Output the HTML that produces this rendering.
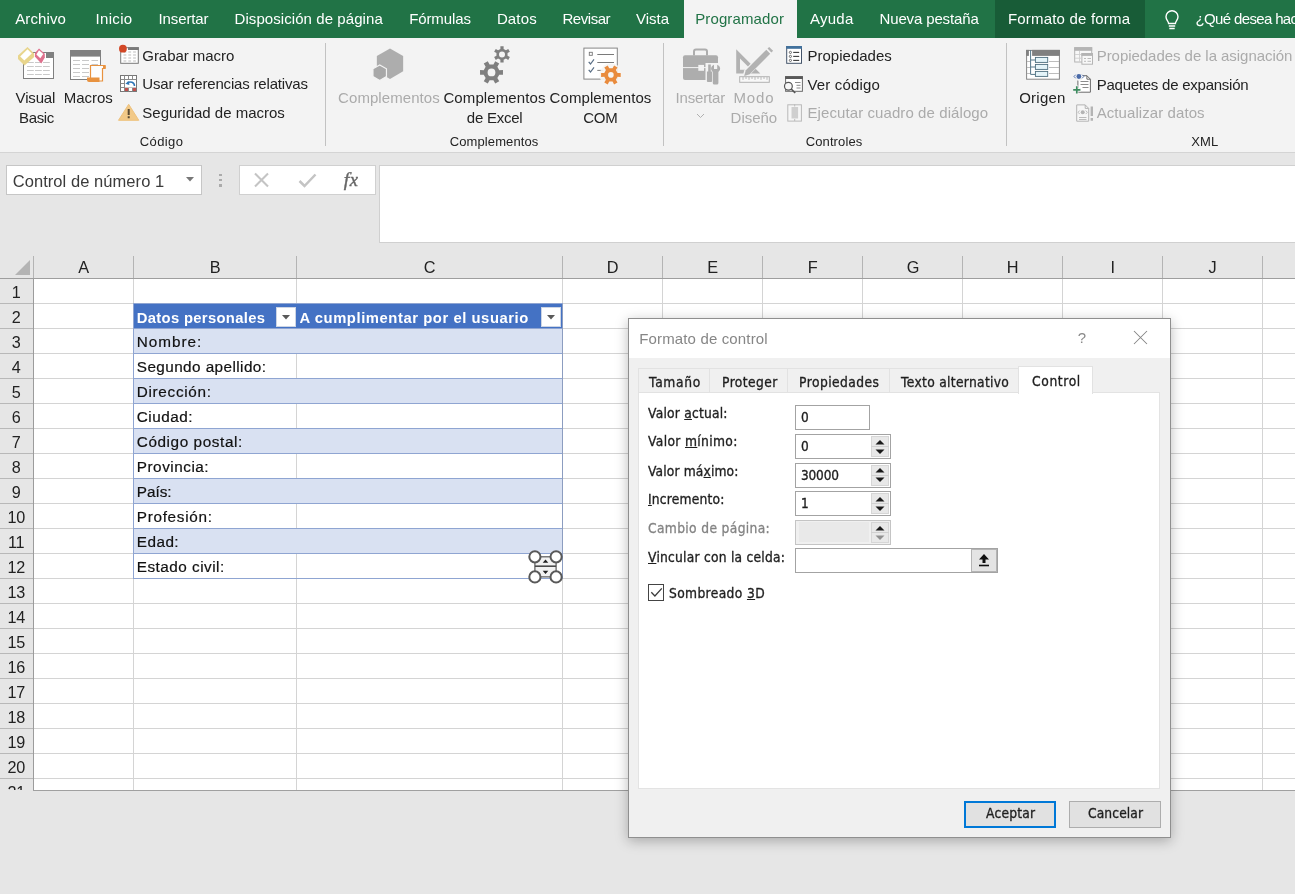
<!DOCTYPE html>
<html lang="es"><head><meta charset="utf-8"><title>Excel - Formato de control</title>
<style>
html,body{margin:0;padding:0}
body{width:1295px;height:894px;position:relative;overflow:hidden;background:#e6e6e6;font-family:"Liberation Sans", sans-serif;}
#app div,#app span,#app svg{position:absolute;box-sizing:border-box}
#app span{white-space:nowrap;line-height:20px;height:20px}
#app{will-change:transform}
#app u{text-decoration:underline;text-underline-offset:1px}
</style></head><body><div id="app" style="position:absolute;left:0;top:0;width:1295px;height:894px;overflow:hidden">
<div style="left:0px;top:0px;width:1295px;height:38px;background:#217346;"></div>
<div style="left:684px;top:0px;width:113px;height:38px;background:#f3f3f3;"></div>
<div style="left:995px;top:0px;width:150px;height:38px;background:#185c37;"></div>
<span id="t0" style="left:15.2px;top:9.1px;font-size:15px;color:#ffffff;letter-spacing:0.124px;">Archivo</span>
<span id="t1" style="left:95.5px;top:9.1px;font-size:15px;color:#ffffff;letter-spacing:0.328px;">Inicio</span>
<span id="t2" style="left:158.5px;top:9.1px;font-size:15px;color:#ffffff;letter-spacing:-0.107px;">Insertar</span>
<span id="t3" style="left:234.5px;top:9.1px;font-size:15px;color:#ffffff;letter-spacing:0.073px;">Disposición de página</span>
<span id="t4" style="left:409.2px;top:9.1px;font-size:15px;color:#ffffff;letter-spacing:-0.114px;">Fórmulas</span>
<span id="t5" style="left:496.9px;top:9.1px;font-size:15px;color:#ffffff;letter-spacing:0.143px;">Datos</span>
<span id="t6" style="left:562.5px;top:9.1px;font-size:15px;color:#ffffff;letter-spacing:-0.466px;">Revisar</span>
<span id="t7" style="left:635.9px;top:9.1px;font-size:15px;color:#ffffff;letter-spacing:0.024px;">Vista</span>
<span id="t8" style="left:695.2px;top:9.1px;font-size:15px;color:#217346;letter-spacing:0.123px;">Programador</span>
<span id="t9" style="left:809.9px;top:9.1px;font-size:15px;color:#ffffff;letter-spacing:0.287px;">Ayuda</span>
<span id="t10" style="left:879.5px;top:9.1px;font-size:15px;color:#ffffff;letter-spacing:-0.139px;">Nueva pestaña</span>
<span id="t11" style="left:1007.9px;top:9.1px;font-size:15px;color:#ffffff;letter-spacing:0.199px;">Formato de forma</span>
<span id="t12" style="left:1195.6px;top:9.1px;font-size:15px;color:#ffffff;letter-spacing:-0.65px;">¿Qué desea hacer?</span>
<svg style="left:1161px;top:6.700px" width="22" height="24" viewBox="0 0 22 24"><g fill="none" stroke="#fff" stroke-width="1.4"><path d="M7.6 16.5c0-2.2-2.6-3.4-2.6-6.8a6 6 0 0 1 12 0c0 3.400-2.600 4.600-2.600 6.800z"/><path d="M7.800 19h6.400M8.300 21.500h5.400"/></g></svg>
<div style="left:0px;top:38px;width:1295px;height:114px;background:#f3f3f3;"></div>
<div style="left:0px;top:152px;width:1295px;height:1px;background:#d4d4d4;"></div>
<div style="left:325px;top:43px;width:1px;height:103px;background:#c2c2c2;"></div>
<div style="left:663px;top:43px;width:1px;height:103px;background:#c2c2c2;"></div>
<div style="left:1006px;top:43px;width:1px;height:103px;background:#c2c2c2;"></div>
<span id="t13" style="left:15.6px;top:87.5px;font-size:15px;color:#232323;letter-spacing:-0.166px;">Visual</span>
<span id="t14" style="left:19.0px;top:107.5px;font-size:15px;color:#232323;letter-spacing:-0.337px;">Basic</span>
<span id="t15" style="left:63.8px;top:87.5px;font-size:15px;color:#232323;letter-spacing:-0.048px;">Macros</span>
<span id="t16" style="left:142.3px;top:45.5px;font-size:15px;color:#232323;letter-spacing:-0.044px;">Grabar macro</span>
<span id="t17" style="left:142.3px;top:74.4px;font-size:15px;color:#232323;letter-spacing:-0.175px;">Usar referencias relativas</span>
<span id="t18" style="left:142.3px;top:103.1px;font-size:15px;color:#232323;letter-spacing:-0.005px;">Seguridad de macros</span>
<span id="t19" style="left:139.8px;top:132.0px;font-size:13px;color:#232323;letter-spacing:0.383px;">Código</span>
<span id="t20" style="left:338.1px;top:87.7px;font-size:15px;color:#ababab;letter-spacing:0.067px;">Complementos</span>
<span id="t21" style="left:443.4px;top:87.7px;font-size:15px;color:#232323;letter-spacing:0.109px;">Complementos</span>
<span id="t22" style="left:466.8px;top:107.7px;font-size:15px;color:#232323;letter-spacing:-0.243px;">de Excel</span>
<span id="t23" style="left:549.6px;top:87.7px;font-size:15px;color:#232323;letter-spacing:0.076px;">Complementos</span>
<span id="t24" style="left:583.2px;top:107.7px;font-size:15px;color:#232323;letter-spacing:-0.233px;">COM</span>
<span id="t25" style="left:449.7px;top:132.0px;font-size:13px;color:#232323;letter-spacing:0.114px;">Complementos</span>
<span id="t26" style="left:675.5px;top:87.6px;font-size:15px;color:#ababab;letter-spacing:-0.157px;">Insertar</span>
<span id="t27" style="left:733.5px;top:87.6px;font-size:15px;color:#ababab;letter-spacing:0.867px;">Modo</span>
<span id="t28" style="left:730.6px;top:108.0px;font-size:15px;color:#ababab;letter-spacing:-0.034px;">Diseño</span>
<span id="t29" style="left:807.5px;top:45.7px;font-size:15px;color:#232323;letter-spacing:0.006px;">Propiedades</span>
<span id="t30" style="left:807.5px;top:74.8px;font-size:15px;color:#232323;letter-spacing:0.161px;">Ver código</span>
<span id="t31" style="left:807.5px;top:103.4px;font-size:15px;color:#ababab;letter-spacing:0.086px;">Ejecutar cuadro de diálogo</span>
<span id="t32" style="left:805.7px;top:132.0px;font-size:13px;color:#232323;letter-spacing:0.118px;">Controles</span>
<span id="t33" style="left:1019.2px;top:87.7px;font-size:15px;color:#232323;letter-spacing:0.245px;">Origen</span>
<span id="t34" style="left:1096.7px;top:45.6px;font-size:15px;color:#ababab;letter-spacing:-0.040px;">Propiedades de la asignación</span>
<span id="t35" style="left:1096.7px;top:74.8px;font-size:15px;color:#232323;letter-spacing:-0.243px;">Paquetes de expansión</span>
<span id="t36" style="left:1096.7px;top:103.2px;font-size:15px;color:#ababab;letter-spacing:0.079px;">Actualizar datos</span>
<span id="t37" style="left:1191.2px;top:132.3px;font-size:13px;color:#232323;letter-spacing:0.122px;">XML</span>
<svg style="left:16px;top:45px" width="40" height="36" viewBox="16 45 40 36"><rect x="23.5" y="52.5" width="30" height="26" fill="#fff" stroke="#808080"/><rect x="46" y="52" width="8" height="6" fill="#808080"/><path d="M27 62.5h6.800M35 62.5h6.800M43 62.5h6.800" stroke="#c9c9c9" stroke-width="1"/><path d="M27 66.5h6.800M35 66.5h6.800M43 66.5h6.800" stroke="#c9c9c9" stroke-width="1"/><path d="M27 70.5h6.800M35 70.5h6.800M43 70.5h6.800" stroke="#c9c9c9" stroke-width="1"/><path d="M27 74.5h6.800M35 74.5h6.800M43 74.5h6.800" stroke="#c9c9c9" stroke-width="1"/><path d="M27.500 47L34.200 53.500V57L24.500 65.500L18 59V55.500Z" fill="#e8d58c"/><path d="M27.500 49.200L31.800 53.500L24.300 60.500L20.200 56.400Z" fill="#fff"/><path d="M39 48.500L44.800 53.800V57.500L41.300 63.500L35 56.800V53Z" fill="#e0708d"/><path d="M39 50.200L43.300 54L40.300 58.300L36.400 54.400Z" fill="#fff"/></svg>
<svg style="left:68px;top:48px" width="40" height="36" viewBox="68 48 40 36"><rect x="70.500" y="50.500" width="30" height="29" fill="#fff" stroke="#808080"/><rect x="70" y="50" width="31" height="6.600" fill="#808080"/><path d="M73 60.5h7M82 60.5h7M91.500 60.5h6.500" stroke="#c9c9c9" stroke-width="1"/><path d="M73 64.5h7M82 64.5h7M91.500 64.5h6.500" stroke="#c9c9c9" stroke-width="1"/><path d="M73 68.5h7M82 68.5h7M91.500 68.5h6.500" stroke="#c9c9c9" stroke-width="1"/><path d="M73 72.5h7M82 72.5h7M91.500 72.5h6.500" stroke="#c9c9c9" stroke-width="1"/><path d="M73 76.5h7M82 76.5h7M91.500 76.5h6.500" stroke="#c9c9c9" stroke-width="1"/><path d="M90.500 65.500h14.500v3h-2.500v12.500h-12z" fill="#fdfdfd" stroke="#e8923f" stroke-width="1.200"/><path d="M87 77.500h12.500v4.500h-10.500a2 2 0 0 1-2-2z" fill="#e8923f"/><path d="M103 65.500h2.600v3h-2.600z" fill="#e8923f"/></svg>
<svg style="left:118px;top:44px" width="22" height="21" viewBox="118 44 22 21"><rect x="120.700" y="47.700" width="17.600" height="15.600" fill="#fff" stroke="#7a7a7a"/><rect x="128" y="47.200" width="10.800" height="2.800" fill="#7a7a7a"/><path d="M123.500 52h2.800M128.300 52h2.800M133.100 52h2.800" stroke="#bdbdbd" stroke-width="1.200"/><path d="M123.500 55h2.800M128.300 55h2.800M133.100 55h2.800" stroke="#bdbdbd" stroke-width="1.200"/><path d="M123.500 58h2.800M128.300 58h2.800M133.100 58h2.800" stroke="#bdbdbd" stroke-width="1.200"/><path d="M123.500 61h2.800M128.300 61h2.800M133.100 61h2.800" stroke="#bdbdbd" stroke-width="1.200"/><circle cx="122.900" cy="48.700" r="3.900" fill="#d24726"/></svg>
<svg style="left:119px;top:74px" width="20" height="20" viewBox="119 74 20 20"><rect x="120.500" y="75.500" width="16" height="16" fill="#fff" stroke="#777"/><path d="M124.500 75.500v16M128.500 75.500v16M132.500 75.500v16M120.500 79.500h16M120.500 83.500h16M120.500 87.500h16" stroke="#8a8a8a" stroke-width="1" fill="none"/><rect x="125" y="88" width="3" height="3" fill="#c0504d"/><rect x="133" y="88" width="3" height="3" fill="#c0504d"/><rect x="125" y="80" width="11" height="7.500" fill="#fff"/><path d="M134.500 86c0-3.800-4-5-7.500-3.300" fill="none" stroke="#2e75b6" stroke-width="1.500"/><path d="M125.300 83.800l3.600-2.500.5 3.600z" fill="#2e75b6"/></svg>
<svg style="left:117px;top:102px" width="24" height="21" viewBox="117 102 24 21"><path d="M128.700 104.300L138.800 120.300H118.500Z" fill="#f2c987" stroke="#eec27e" stroke-width="1" stroke-linejoin="round"/><path d="M127.700 109h2v6h-2zM127.700 116.300h2v2h-2z" fill="#5a4a32"/></svg>
<svg style="left:370px;top:46px" width="36" height="36" viewBox="370 46 36 36"><polygon points="390,48.5 376.84,56.1 376.84,71.3 390,78.9 403.16,71.3 403.16,56.1" fill="#adadad"/><polygon points="379.7,64.9 372.95,68.8 372.95,76.6 379.7,80.5 386.45,76.6 386.45,68.8" fill="#a8a8a8" stroke="#f3f3f3" stroke-width="1.200"/></svg>
<svg style="left:478px;top:44px" width="34" height="42" viewBox="478 44 34 42"><path d="M502.97 70.09 L502.97 74.71 L499.28 74.66 L497.35 78.01 L499.24 81.18 L495.23 83.49 L493.43 80.27 L489.57 80.27 L487.77 83.49 L483.76 81.18 L485.65 78.01 L483.72 74.66 L480.03 74.71 L480.03 70.09 L483.72 70.14 L485.65 66.79 L483.76 63.62 L487.77 61.31 L489.57 64.53 L493.43 64.53 L495.23 61.31 L499.24 63.62 L497.35 66.79 L499.28 70.14Z M495.4 72.4 A3.9 3.9 0 1 0 487.6 72.4 A3.9 3.9 0 1 0 495.4 72.4Z" fill="#7f7f7f" fill-rule="evenodd"/><path d="M503.64 62.54 L500.36 62.54 L500.41 59.87 L498.05 58.51 L495.77 59.89 L494.13 57.05 L496.46 55.76 L496.46 53.04 L494.13 51.75 L495.77 48.91 L498.05 50.29 L500.41 48.93 L500.36 46.26 L503.64 46.26 L503.59 48.93 L505.95 50.29 L508.23 48.91 L509.87 51.75 L507.54 53.04 L507.54 55.76 L509.87 57.05 L508.23 59.89 L505.95 58.51 L503.59 59.87Z M505 54.4 A3 3 0 1 0 499 54.4 A3 3 0 1 0 505 54.4Z" fill="#7f7f7f" fill-rule="evenodd"/></svg>
<svg style="left:582px;top:46px" width="42" height="42" viewBox="582 46 42 42"><rect x="583.900" y="48.100" width="33.400" height="31" fill="#fff" stroke="#858585"/><rect x="589.300" y="52.300" width="3" height="3" fill="none" stroke="#777" stroke-width="0.900"/><path d="M597.300 54.500h16.700M597.300 62.500h16.700M597.300 70.400h6" stroke="#7a7a7a" stroke-width="1"/><path d="M588.700 61.800l1.800 2.200 3.500-4.600M588.700 69.800l1.800 2.200 3.500-4.600" fill="none" stroke="#5a6f86" stroke-width="1.200"/><circle cx="610.900" cy="74.900" r="11.300" fill="#f6f4f2" opacity="0.900"/><path d="M620.7 72.92 L620.7 76.88 L617.53 76.83 L615.88 79.68 L617.51 82.4 L614.09 84.38 L612.55 81.6 L609.25 81.6 L607.71 84.38 L604.29 82.4 L605.92 79.68 L604.27 76.83 L601.1 76.88 L601.1 72.92 L604.27 72.97 L605.92 70.12 L604.29 67.4 L607.71 65.42 L609.25 68.2 L612.55 68.2 L614.09 65.42 L617.51 67.4 L615.88 70.12 L617.53 72.97Z M613.7 74.9 A2.8 2.8 0 1 0 608.1 74.9 A2.8 2.8 0 1 0 613.7 74.9Z" fill="#e98b3d" fill-rule="evenodd"/></svg>
<svg style="left:681px;top:47px" width="42" height="39" viewBox="681 47 42 39"><path d="M694 55.500v-4a2 2 0 0 1 2-2h9a2 2 0 0 1 2 2v4" fill="none" stroke="#adadad" stroke-width="2"/><rect x="683" y="55.200" width="35" height="24.800" rx="2" fill="#adadad"/><path d="M683 67.600h35" stroke="#f3f3f3" stroke-width="1"/><rect x="698.300" y="64.900" width="5.700" height="5.900" fill="#f3f3f3"/><path d="M705.500 63h16v22h-16z" fill="#f3f3f3"/><path d="M708.200 64.500h2.600v7h1.300v9.500a1 1 0 0 1-1 1h-3.200a1 1 0 0 1-1-1V71.500h1.300z" fill="#adadad"/><path d="M714 64.800v4.200h3.200v-4.200a4 4 0 0 1 1.200 7.200v11a1.500 1.500 0 0 1-1.500 1.500h-2.600a1.500 1.500 0 0 1-1.500-1.500v-11a4 4 0 0 1 1.200-7.200z" fill="#adadad"/></svg>
<svg style="left:734px;top:45px" width="42" height="40" viewBox="734 45 42 40"><path d="M736.200 49.200V73.500H760.300Z M740 58.500L751.200 69.800H740Z" fill="#b2b2b2" fill-rule="evenodd"/><path d="M768.500 45.500l5.300 5.300-24.500 24.500-7 2 2-7z" fill="#f3f3f3"/><path d="M766.300 49.800l3.900 3.900-20.500 20.500-5.600 1.700 1.700-5.600z" fill="#b2b2b2"/><path d="M767.500 48.600l1.700-1.700 3.900 3.900-1.700 1.700z" fill="#b2b2b2"/><rect x="739.700" y="76.700" width="29.600" height="5.600" fill="#f8f8f8" stroke="#b2b2b2"/><path d="M743 77v2.800M746 77v2M749 77v2.800M752 77v2M755 77v2.800M758 77v2M761 77v2.800M764 77v2M767 77v2.800" stroke="#b2b2b2" stroke-width="0.900"/></svg>
<svg style="left:785px;top:45px" width="18" height="20" viewBox="785 45 18 20"><rect x="786.700" y="46.500" width="14.800" height="16.800" fill="#fff" stroke="#44546a"/><rect x="786.200" y="46" width="15.800" height="2.800" fill="#41719c"/><circle cx="790.400" cy="52.4" r="1.100" fill="#fff" stroke="#3b3b3b" stroke-width="0.700"/><path d="M793.200 52.4h6" stroke="#3b3b3b" stroke-width="1.100"/><circle cx="790.400" cy="56.4" r="1.100" fill="#fff" stroke="#3b3b3b" stroke-width="0.700"/><path d="M793.200 56.4h6" stroke="#3b3b3b" stroke-width="1.100"/><circle cx="790.400" cy="60.4" r="1.100" fill="#fff" stroke="#3b3b3b" stroke-width="0.700"/><path d="M793.200 60.4h6" stroke="#3b3b3b" stroke-width="1.100"/></svg>
<svg style="left:783px;top:75px" width="22" height="20" viewBox="783 75 22 20"><rect x="785.600" y="76.700" width="16.800" height="14.600" fill="#fff" stroke="#6a6a6a"/><rect x="785.100" y="76.200" width="17.800" height="2.800" fill="#595959"/><path d="M795 82.500h5.500M796.500 85.300h4M796.500 88h4" stroke="#8a8a8a" stroke-width="1"/><circle cx="788.400" cy="86.200" r="3.900" fill="#f6f6f6" stroke="#555" stroke-width="1.200"/><path d="M791.200 89l4 4" stroke="#555" stroke-width="1.700"/></svg>
<svg style="left:786px;top:103px" width="18" height="20" viewBox="786 103 18 20"><rect x="787.800" y="104.800" width="13.600" height="16.300" fill="#f6f6f6" stroke="#b9b9b9"/><rect x="791.500" y="107" width="6.600" height="11.500" fill="#cfcfcf"/><path d="M794.700 104.500v2M794.700 119v2" stroke="#b0b0b0" stroke-width="0.800"/></svg>
<svg style="left:1025px;top:48px" width="36" height="33" viewBox="1025 48 36 33"><rect x="1026.600" y="50.400" width="32.800" height="28.800" fill="#fff" stroke="#858585"/><rect x="1032.100" y="49.900" width="27.800" height="6" fill="#808080"/><rect x="1026.100" y="49.900" width="2.800" height="6" fill="#808080"/><path d="M1049 61.500h10M1049 67.500h10M1049 73.500h10M1027 61.500h3M1027 67.500h3M1027 73.500h3" stroke="#bdbdbd" stroke-width="1"/><path d="M1030.600 50v24.400h5M1030.600 60h5M1030.600 67h5" fill="none" stroke="#54788a" stroke-width="1"/><rect x="1035.400" y="57.4" width="12.300" height="5" fill="#e4f4f9" stroke="#4d6e7e" stroke-width="0.900"/><rect x="1035.400" y="64.4" width="12.300" height="5" fill="#e4f4f9" stroke="#4d6e7e" stroke-width="0.900"/><rect x="1035.400" y="71.4" width="12.300" height="5" fill="#e4f4f9" stroke="#4d6e7e" stroke-width="0.900"/></svg>
<svg style="left:1073px;top:46px" width="21" height="20" viewBox="1073 46 21 20"><rect x="1074.700" y="47.700" width="17" height="14.300" fill="#f8f8f8" stroke="#b4b4b4"/><rect x="1074.200" y="47.200" width="18" height="3.600" fill="#b4b4b4"/><path d="M1075 54.500h6M1075 58.200h6M1079.500 51v11" stroke="#cfcfcf" stroke-width="0.900"/><rect x="1081.900" y="53.600" width="10.600" height="10.600" fill="#f8f8f8" stroke="#b4b4b4"/><rect x="1081.400" y="53.100" width="11.600" height="2.800" fill="#b4b4b4"/><path d="M1084 58.500h2M1087.500 58.500h3.500M1084 61.300h2M1087.500 61.300h3.500" stroke="#b4b4b4" stroke-width="0.900"/></svg>
<svg style="left:1072px;top:72px" width="21" height="23" viewBox="1072 72 21 23"><path d="M1077.900 75.700h9l3.500 3.500v13h-12.500z" fill="#fff" stroke="#6a6a6a" stroke-width="1"/><path d="M1086.900 75.700v3.500h3.500" fill="none" stroke="#6a6a6a" stroke-width="1"/><path d="M1080.500 81.500h8M1080.500 84.500h8M1082.500 87.500h6" stroke="#8c8c8c" stroke-width="1"/><circle cx="1078.900" cy="76.500" r="4.200" fill="#f3f3f3"/><circle cx="1078.900" cy="76.500" r="2.400" fill="#4a6aa8"/><path d="M1075.700 74.700l-1.700 1.800 1.700 1.800M1082.100 74.700l1.700 1.800-1.700 1.800" fill="none" stroke="#4a6aa8" stroke-width="0.900"/><path d="M1072.500 89.800h8.500M1076.700 85.600v8.500" stroke="#f3f3f3" stroke-width="3.400"/><path d="M1073.200 89.800h7.200M1076.800 86.200v7.200" stroke="#3d8b5f" stroke-width="1.700"/></svg>
<svg style="left:1075px;top:103px" width="20" height="20" viewBox="1075 103 20 20"><path d="M1076.700 104.900h8.500l3.500 3.500v12.800h-12z" fill="#f6f6f6" stroke="#b4b4b4" stroke-width="1"/><path d="M1085.200 104.900v3.500h3.500" fill="none" stroke="#b4b4b4"/><circle cx="1082.700" cy="112.300" r="2" fill="#b4b4b4"/><path d="M1079.700 110.500l-1.600 1.800 1.600 1.800M1085.700 110.500l1.600 1.800-1.600 1.800M1079 117.500h7.500M1079 119.500h7.500" fill="none" stroke="#b4b4b4" stroke-width="0.900"/><path d="M1090.600 106.500h2.400v9.500h-2.400zM1090.600 118h2.400v2.800h-2.400z" fill="#b4b4b4"/></svg>
<svg style="left:696px;top:113px" width="9" height="6" viewBox="0 0 9 6"><path d="M1 1l3.500 3.500L8 1" fill="none" stroke="#b0b0b0" stroke-width="1"/></svg>
<div style="left:6px;top:165px;width:196px;height:30px;background:#fff;border:1px solid #c6c6c6;"></div>
<span id="t38" style="left:12.7px;top:170.6px;font-size:16.5px;color:#3b3b3b;letter-spacing:0.062px;">Control de número 1</span>
<svg style="left:186px;top:177px" width="8" height="5" viewBox="0 0 8 5"><path d="M0 0h8L4 4.500z" fill="#777"/></svg>
<div style="left:219px;top:173.7px;width:3px;height:2.6px;background:#ababab;"></div>
<div style="left:219px;top:178.9px;width:3px;height:2.6px;background:#ababab;"></div>
<div style="left:219px;top:184px;width:3px;height:2.6px;background:#ababab;"></div>
<div style="left:239px;top:165px;width:137px;height:30px;background:#fff;border:1px solid #d0d0d0;"></div>
<svg style="left:253px;top:172px" width="18" height="16" viewBox="0 0 18 16"><path d="M2 1.500l13 13M15 1.500l-13 13" stroke="#c4c4c4" stroke-width="2.100" fill="none"/></svg>
<svg style="left:297px;top:172px" width="20" height="16" viewBox="0 0 20 16"><path d="M2.500 9l5 5L18.500 2.500" stroke="#c4c4c4" stroke-width="2.500" fill="none"/></svg>
<span id="t39" style="left:343.7px;top:169.6px;font-size:19.5px;color:#666;font-family:'Liberation Serif', serif;font-style:italic;-webkit-text-stroke:0.4px #666;">f</span>
<span id="t40" style="left:349.7px;top:170.2px;font-size:18.5px;color:#666;font-family:'Liberation Serif', serif;font-style:italic;-webkit-text-stroke:0.4px #666;">x</span>
<div style="left:379px;top:165px;width:920px;height:78px;background:#fff;border:1px solid #d0d0d0;"></div>
<div style="left:0px;top:255px;width:1295px;height:24px;background:#e6e6e6;"></div>
<div style="left:0px;top:279px;width:34px;height:511px;background:#e6e6e6;"></div>
<div style="left:34px;top:279px;width:1261px;height:511px;background:#fff;"></div>
<div style="left:34px;top:303px;width:1261px;height:1px;background:#d4d4d4;"></div>
<div style="left:34px;top:328px;width:1261px;height:1px;background:#d4d4d4;"></div>
<div style="left:34px;top:353px;width:1261px;height:1px;background:#d4d4d4;"></div>
<div style="left:34px;top:378px;width:1261px;height:1px;background:#d4d4d4;"></div>
<div style="left:34px;top:403px;width:1261px;height:1px;background:#d4d4d4;"></div>
<div style="left:34px;top:428px;width:1261px;height:1px;background:#d4d4d4;"></div>
<div style="left:34px;top:453px;width:1261px;height:1px;background:#d4d4d4;"></div>
<div style="left:34px;top:478px;width:1261px;height:1px;background:#d4d4d4;"></div>
<div style="left:34px;top:503px;width:1261px;height:1px;background:#d4d4d4;"></div>
<div style="left:34px;top:528px;width:1261px;height:1px;background:#d4d4d4;"></div>
<div style="left:34px;top:553px;width:1261px;height:1px;background:#d4d4d4;"></div>
<div style="left:34px;top:578px;width:1261px;height:1px;background:#d4d4d4;"></div>
<div style="left:34px;top:603px;width:1261px;height:1px;background:#d4d4d4;"></div>
<div style="left:34px;top:628px;width:1261px;height:1px;background:#d4d4d4;"></div>
<div style="left:34px;top:653px;width:1261px;height:1px;background:#d4d4d4;"></div>
<div style="left:34px;top:678px;width:1261px;height:1px;background:#d4d4d4;"></div>
<div style="left:34px;top:703px;width:1261px;height:1px;background:#d4d4d4;"></div>
<div style="left:34px;top:728px;width:1261px;height:1px;background:#d4d4d4;"></div>
<div style="left:34px;top:753px;width:1261px;height:1px;background:#d4d4d4;"></div>
<div style="left:34px;top:778px;width:1261px;height:1px;background:#d4d4d4;"></div>
<div style="left:133px;top:279px;width:1px;height:511px;background:#d4d4d4;"></div>
<div style="left:296px;top:279px;width:1px;height:511px;background:#d4d4d4;"></div>
<div style="left:562px;top:279px;width:1px;height:511px;background:#d4d4d4;"></div>
<div style="left:662px;top:279px;width:1px;height:511px;background:#d4d4d4;"></div>
<div style="left:762px;top:279px;width:1px;height:511px;background:#d4d4d4;"></div>
<div style="left:862px;top:279px;width:1px;height:511px;background:#d4d4d4;"></div>
<div style="left:962px;top:279px;width:1px;height:511px;background:#d4d4d4;"></div>
<div style="left:1062px;top:279px;width:1px;height:511px;background:#d4d4d4;"></div>
<div style="left:1162px;top:279px;width:1px;height:511px;background:#d4d4d4;"></div>
<div style="left:1262px;top:279px;width:1px;height:511px;background:#d4d4d4;"></div>
<div style="left:33px;top:256px;width:1px;height:23px;background:#b4b4b4;"></div>
<div style="left:133px;top:256px;width:1px;height:23px;background:#b4b4b4;"></div>
<div style="left:296px;top:256px;width:1px;height:23px;background:#b4b4b4;"></div>
<div style="left:562px;top:256px;width:1px;height:23px;background:#b4b4b4;"></div>
<div style="left:662px;top:256px;width:1px;height:23px;background:#b4b4b4;"></div>
<div style="left:762px;top:256px;width:1px;height:23px;background:#b4b4b4;"></div>
<div style="left:862px;top:256px;width:1px;height:23px;background:#b4b4b4;"></div>
<div style="left:962px;top:256px;width:1px;height:23px;background:#b4b4b4;"></div>
<div style="left:1062px;top:256px;width:1px;height:23px;background:#b4b4b4;"></div>
<div style="left:1162px;top:256px;width:1px;height:23px;background:#b4b4b4;"></div>
<div style="left:1262px;top:256px;width:1px;height:23px;background:#b4b4b4;"></div>
<div style="left:0px;top:278px;width:1295px;height:1px;background:#9e9e9e;"></div>
<div style="left:33px;top:279px;width:1px;height:511px;background:#9c9c9c;"></div>
<div style="left:0px;top:303px;width:33px;height:1px;background:#b8b8b8;"></div>
<div style="left:0px;top:328px;width:33px;height:1px;background:#b8b8b8;"></div>
<div style="left:0px;top:353px;width:33px;height:1px;background:#b8b8b8;"></div>
<div style="left:0px;top:378px;width:33px;height:1px;background:#b8b8b8;"></div>
<div style="left:0px;top:403px;width:33px;height:1px;background:#b8b8b8;"></div>
<div style="left:0px;top:428px;width:33px;height:1px;background:#b8b8b8;"></div>
<div style="left:0px;top:453px;width:33px;height:1px;background:#b8b8b8;"></div>
<div style="left:0px;top:478px;width:33px;height:1px;background:#b8b8b8;"></div>
<div style="left:0px;top:503px;width:33px;height:1px;background:#b8b8b8;"></div>
<div style="left:0px;top:528px;width:33px;height:1px;background:#b8b8b8;"></div>
<div style="left:0px;top:553px;width:33px;height:1px;background:#b8b8b8;"></div>
<div style="left:0px;top:578px;width:33px;height:1px;background:#b8b8b8;"></div>
<div style="left:0px;top:603px;width:33px;height:1px;background:#b8b8b8;"></div>
<div style="left:0px;top:628px;width:33px;height:1px;background:#b8b8b8;"></div>
<div style="left:0px;top:653px;width:33px;height:1px;background:#b8b8b8;"></div>
<div style="left:0px;top:678px;width:33px;height:1px;background:#b8b8b8;"></div>
<div style="left:0px;top:703px;width:33px;height:1px;background:#b8b8b8;"></div>
<div style="left:0px;top:728px;width:33px;height:1px;background:#b8b8b8;"></div>
<div style="left:0px;top:753px;width:33px;height:1px;background:#b8b8b8;"></div>
<div style="left:0px;top:778px;width:33px;height:1px;background:#b8b8b8;"></div>
<svg style="left:14px;top:259px" width="17" height="17" viewBox="0 0 17 17"><path d="M16 1v15H1z" fill="#b4b4b4"/></svg>
<span id="t41" style="left:77.7px;top:257.1px;font-size:16.3px;color:#222;width:12px;text-align:center;">A</span>
<span id="t42" style="left:209.2px;top:257.1px;font-size:16.3px;color:#222;width:12px;text-align:center;">B</span>
<span id="t43" style="left:423.7px;top:257.1px;font-size:16.3px;color:#222;width:12px;text-align:center;">C</span>
<span id="t44" style="left:606.7px;top:257.1px;font-size:16.3px;color:#222;width:12px;text-align:center;">D</span>
<span id="t45" style="left:706.7px;top:257.1px;font-size:16.3px;color:#222;width:12px;text-align:center;">E</span>
<span id="t46" style="left:806.7px;top:257.1px;font-size:16.3px;color:#222;width:12px;text-align:center;">F</span>
<span id="t47" style="left:906.7px;top:257.1px;font-size:16.3px;color:#222;width:12px;text-align:center;">G</span>
<span id="t48" style="left:1006.7px;top:257.1px;font-size:16.3px;color:#222;width:12px;text-align:center;">H</span>
<span id="t49" style="left:1106.7px;top:257.1px;font-size:16.3px;color:#222;width:12px;text-align:center;">I</span>
<span id="t50" style="left:1206.7px;top:257.1px;font-size:16.3px;color:#222;width:12px;text-align:center;">J</span>
<span id="t51" style="left:-0.8px;top:282.0px;font-size:16.2px;color:#222;width:34px;text-align:center;letter-spacing:-0.3px;">1</span>
<span id="t52" style="left:-0.8px;top:307.0px;font-size:16.2px;color:#222;width:34px;text-align:center;letter-spacing:-0.3px;">2</span>
<span id="t53" style="left:-0.8px;top:332.0px;font-size:16.2px;color:#222;width:34px;text-align:center;letter-spacing:-0.3px;">3</span>
<span id="t54" style="left:-0.8px;top:357.0px;font-size:16.2px;color:#222;width:34px;text-align:center;letter-spacing:-0.3px;">4</span>
<span id="t55" style="left:-0.8px;top:382.0px;font-size:16.2px;color:#222;width:34px;text-align:center;letter-spacing:-0.3px;">5</span>
<span id="t56" style="left:-0.8px;top:407.0px;font-size:16.2px;color:#222;width:34px;text-align:center;letter-spacing:-0.3px;">6</span>
<span id="t57" style="left:-0.8px;top:432.0px;font-size:16.2px;color:#222;width:34px;text-align:center;letter-spacing:-0.3px;">7</span>
<span id="t58" style="left:-0.8px;top:457.0px;font-size:16.2px;color:#222;width:34px;text-align:center;letter-spacing:-0.3px;">8</span>
<span id="t59" style="left:-0.8px;top:482.0px;font-size:16.2px;color:#222;width:34px;text-align:center;letter-spacing:-0.3px;">9</span>
<span id="t60" style="left:-0.8px;top:507.0px;font-size:16.2px;color:#222;width:34px;text-align:center;letter-spacing:-0.3px;">10</span>
<span id="t61" style="left:-0.8px;top:532.0px;font-size:16.2px;color:#222;width:34px;text-align:center;letter-spacing:-0.3px;">11</span>
<span id="t62" style="left:-0.8px;top:557.0px;font-size:16.2px;color:#222;width:34px;text-align:center;letter-spacing:-0.3px;">12</span>
<span id="t63" style="left:-0.8px;top:582.0px;font-size:16.2px;color:#222;width:34px;text-align:center;letter-spacing:-0.3px;">13</span>
<span id="t64" style="left:-0.8px;top:607.0px;font-size:16.2px;color:#222;width:34px;text-align:center;letter-spacing:-0.3px;">14</span>
<span id="t65" style="left:-0.8px;top:632.0px;font-size:16.2px;color:#222;width:34px;text-align:center;letter-spacing:-0.3px;">15</span>
<span id="t66" style="left:-0.8px;top:657.0px;font-size:16.2px;color:#222;width:34px;text-align:center;letter-spacing:-0.3px;">16</span>
<span id="t67" style="left:-0.8px;top:682.0px;font-size:16.2px;color:#222;width:34px;text-align:center;letter-spacing:-0.3px;">17</span>
<span id="t68" style="left:-0.8px;top:707.0px;font-size:16.2px;color:#222;width:34px;text-align:center;letter-spacing:-0.3px;">18</span>
<span id="t69" style="left:-0.8px;top:732.0px;font-size:16.2px;color:#222;width:34px;text-align:center;letter-spacing:-0.3px;">19</span>
<span id="t70" style="left:-0.8px;top:757.0px;font-size:16.2px;color:#222;width:34px;text-align:center;letter-spacing:-0.3px;">20</span>
<span id="t71" style="left:-0.8px;top:782.0px;font-size:16.2px;color:#222;width:34px;text-align:center;letter-spacing:-0.3px;">21</span>
<div style="left:134px;top:304px;width:429px;height:24px;background:#4472c4;"></div>
<div style="left:134px;top:329px;width:429px;height:24px;background:#d9e1f2;"></div>
<div style="left:134px;top:379px;width:429px;height:24px;background:#d9e1f2;"></div>
<div style="left:134px;top:429px;width:429px;height:24px;background:#d9e1f2;"></div>
<div style="left:134px;top:479px;width:429px;height:24px;background:#d9e1f2;"></div>
<div style="left:134px;top:529px;width:429px;height:24px;background:#d9e1f2;"></div>
<div style="left:133px;top:328px;width:430px;height:1px;background:#8fa5d2;"></div>
<div style="left:133px;top:353px;width:430px;height:1px;background:#8fa5d2;"></div>
<div style="left:133px;top:378px;width:430px;height:1px;background:#8fa5d2;"></div>
<div style="left:133px;top:403px;width:430px;height:1px;background:#8fa5d2;"></div>
<div style="left:133px;top:428px;width:430px;height:1px;background:#8fa5d2;"></div>
<div style="left:133px;top:453px;width:430px;height:1px;background:#8fa5d2;"></div>
<div style="left:133px;top:478px;width:430px;height:1px;background:#8fa5d2;"></div>
<div style="left:133px;top:503px;width:430px;height:1px;background:#8fa5d2;"></div>
<div style="left:133px;top:528px;width:430px;height:1px;background:#8fa5d2;"></div>
<div style="left:133px;top:553px;width:430px;height:1px;background:#8fa5d2;"></div>
<div style="left:133px;top:578px;width:430px;height:1px;background:#8fa5d2;"></div>
<div style="left:133px;top:303px;width:1px;height:276px;background:#8fa5d2;"></div>
<div style="left:562px;top:303px;width:1px;height:276px;background:#8c9dc0;"></div>
<div style="left:133px;top:303px;width:430px;height:1px;background:#8fa5d2;"></div>
<span id="t72" style="left:136.8px;top:307.9px;font-size:14.8px;color:#fff;font-weight:700;letter-spacing:0.321px;">Datos personales</span>
<span id="t73" style="left:299.4px;top:307.9px;font-size:14.8px;color:#fff;font-weight:700;letter-spacing:0.561px;">A cumplimentar por el usuario</span>
<span id="t74" style="left:136.8px;top:332.3px;font-size:15.3px;color:#111;letter-spacing:0.949px;-webkit-text-stroke:0.2px #111;">Nombre:</span>
<span id="t75" style="left:136.8px;top:357.3px;font-size:15.3px;color:#111;letter-spacing:0.419px;-webkit-text-stroke:0.2px #111;">Segundo apellido:</span>
<span id="t76" style="left:136.8px;top:382.3px;font-size:15.3px;color:#111;letter-spacing:0.678px;-webkit-text-stroke:0.2px #111;">Dirección:</span>
<span id="t77" style="left:136.8px;top:407.3px;font-size:15.3px;color:#111;letter-spacing:0.509px;-webkit-text-stroke:0.2px #111;">Ciudad:</span>
<span id="t78" style="left:136.8px;top:432.3px;font-size:15.3px;color:#111;letter-spacing:0.586px;-webkit-text-stroke:0.2px #111;">Código postal:</span>
<span id="t79" style="left:136.8px;top:457.3px;font-size:15.3px;color:#111;letter-spacing:0.513px;-webkit-text-stroke:0.2px #111;">Provincia:</span>
<span id="t80" style="left:136.8px;top:482.3px;font-size:15.3px;color:#111;letter-spacing:-0.032px;-webkit-text-stroke:0.2px #111;">País:</span>
<span id="t81" style="left:136.8px;top:507.3px;font-size:15.3px;color:#111;letter-spacing:0.693px;-webkit-text-stroke:0.2px #111;">Profesión:</span>
<span id="t82" style="left:136.8px;top:532.3px;font-size:15.3px;color:#111;letter-spacing:0.463px;-webkit-text-stroke:0.2px #111;">Edad:</span>
<span id="t83" style="left:136.8px;top:557.3px;font-size:15.3px;color:#111;letter-spacing:0.483px;-webkit-text-stroke:0.2px #111;">Estado civil:</span>
<div style="left:275.5px;top:306.5px;width:20px;height:20.3px;background:#fff;border:1px solid #cdd5e4;"></div>
<svg style="left:281.5px;top:314.7px" width="8" height="5" viewBox="0 0 8 5"><path d="M0 0h8L4 4.600z" fill="#595959"/></svg>
<div style="left:541.3px;top:306.5px;width:20px;height:20.3px;background:#fff;border:1px solid #cdd5e4;"></div>
<svg style="left:547.3px;top:314.7px" width="8" height="5" viewBox="0 0 8 5"><path d="M0 0h8L4 4.600z" fill="#595959"/></svg>
<svg style="left:526px;top:548px" width="39" height="37" viewBox="526 548 39 37"><rect x="534.900" y="556.800" width="21.200" height="20.100" fill="#f2f2f2" stroke="#595959" stroke-width="1.200"/><path d="M534.900 566.200h21.200" stroke="#4a4a4a" stroke-width="1.600"/><path d="M542.700 562.700l2.800-3.200 2.800 3.200zM542.700 570.800l2.800 3.200 2.800-3.200z" fill="#222"/><g fill="#fff" stroke="#595959" stroke-width="2"><circle cx="534.900" cy="556.800" r="5.600"/><circle cx="556.100" cy="556.800" r="5.600"/><circle cx="534.900" cy="576.900" r="5.600"/><circle cx="556.100" cy="576.900" r="5.600"/></g></svg>
<div style="left:0px;top:790px;width:1295px;height:104px;background:#e6e6e6;"></div>
<div style="left:33px;top:790px;width:1262px;height:1px;background:#a0a0a0;"></div>
<div style="left:628px;top:318px;width:543px;height:520px;background:#f0f0f0;border:1px solid #8f8f8f;box-shadow:0 3px 12px rgba(0,0,0,0.27);"></div>
<div style="left:629px;top:319px;width:541px;height:39px;background:#fff;"></div>
<span id="t84" style="left:639.2px;top:328.5px;font-size:15px;color:#868686;letter-spacing:0.151px;">Formato de control</span>
<span id="t85" style="left:1077.7px;top:328.3px;font-size:15px;color:#8a8a8a;">?</span>
<svg style="left:1133px;top:330px" width="15" height="15" viewBox="0 0 15 15"><path d="M1 1l13 13M14 1L1 14" stroke="#858585" stroke-width="1.050" fill="none"/></svg>
<div style="left:638px;top:392px;width:522px;height:397px;background:#fff;border:1px solid #e3e3e3;"></div>
<div style="left:638px;top:368px;width:72px;height:25px;background:#f0f0f0;border:1px solid #e2e2e2;"></div>
<div style="left:709px;top:368px;width:79px;height:25px;background:#f0f0f0;border:1px solid #e2e2e2;"></div>
<div style="left:787px;top:368px;width:103px;height:25px;background:#f0f0f0;border:1px solid #e2e2e2;"></div>
<div style="left:889px;top:368px;width:130px;height:25px;background:#f0f0f0;border:1px solid #e2e2e2;"></div>
<div style="left:1018px;top:366px;width:75px;height:28px;background:#fff;border:1px solid #e2e2e2;border-bottom:none;"></div>
<span id="t86" style="left:648.9px;top:372.0px;font-size:13.7px;color:#1f1f1f;font-family:'DejaVu Sans', 'Liberation Sans', sans-serif;letter-spacing:0.734px;transform:scaleX(0.9);transform-origin:0 50%;-webkit-text-stroke:0.35px #1f1f1f;">Tamaño</span>
<span id="t87" style="left:721.5px;top:372.0px;font-size:13.7px;color:#1f1f1f;font-family:'DejaVu Sans', 'Liberation Sans', sans-serif;letter-spacing:0.469px;transform:scaleX(0.9);transform-origin:0 50%;-webkit-text-stroke:0.35px #1f1f1f;">Proteger</span>
<span id="t88" style="left:798.9px;top:372.0px;font-size:13.7px;color:#1f1f1f;font-family:'DejaVu Sans', 'Liberation Sans', sans-serif;letter-spacing:0.499px;transform:scaleX(0.9);transform-origin:0 50%;-webkit-text-stroke:0.35px #1f1f1f;">Propiedades</span>
<span id="t89" style="left:900.9px;top:372.0px;font-size:13.7px;color:#1f1f1f;font-family:'DejaVu Sans', 'Liberation Sans', sans-serif;letter-spacing:0.338px;transform:scaleX(0.9);transform-origin:0 50%;-webkit-text-stroke:0.35px #1f1f1f;">Texto alternativo</span>
<span id="t90" style="left:1031.6px;top:370.7px;font-size:13.7px;color:#1f1f1f;font-family:'DejaVu Sans', 'Liberation Sans', sans-serif;letter-spacing:0.693px;transform:scaleX(0.9);transform-origin:0 50%;-webkit-text-stroke:0.35px #1f1f1f;">Control</span>
<span id="t91" style="left:647.9px;top:403.0px;font-size:13.7px;color:#1f1f1f;font-family:'DejaVu Sans', 'Liberation Sans', sans-serif;letter-spacing:0.227px;transform:scaleX(0.9);transform-origin:0 50%;-webkit-text-stroke:0.35px #1f1f1f;">Valor <u>a</u>ctual:</span>
<span id="t92" style="left:647.9px;top:431.3px;font-size:13.7px;color:#1f1f1f;font-family:'DejaVu Sans', 'Liberation Sans', sans-serif;letter-spacing:0.375px;transform:scaleX(0.9);transform-origin:0 50%;-webkit-text-stroke:0.35px #1f1f1f;">Valor <u>m</u>ínimo:</span>
<span id="t93" style="left:647.9px;top:460.5px;font-size:13.7px;color:#1f1f1f;font-family:'DejaVu Sans', 'Liberation Sans', sans-serif;letter-spacing:0.134px;transform:scaleX(0.9);transform-origin:0 50%;-webkit-text-stroke:0.35px #1f1f1f;">Valor má<u>x</u>imo:</span>
<span id="t94" style="left:647.9px;top:488.8px;font-size:13.7px;color:#1f1f1f;font-family:'DejaVu Sans', 'Liberation Sans', sans-serif;letter-spacing:0.222px;transform:scaleX(0.9);transform-origin:0 50%;-webkit-text-stroke:0.35px #1f1f1f;"><u>I</u>ncremento:</span>
<span id="t95" style="left:647.9px;top:517.7px;font-size:13.7px;color:#838383;font-family:'DejaVu Sans', 'Liberation Sans', sans-serif;letter-spacing:0.380px;transform:scaleX(0.9);transform-origin:0 50%;-webkit-text-stroke:0.3px #838383;">Cambio de página:</span>
<span id="t96" style="left:647.9px;top:547.0px;font-size:13.7px;color:#1f1f1f;font-family:'DejaVu Sans', 'Liberation Sans', sans-serif;letter-spacing:0.255px;transform:scaleX(0.9);transform-origin:0 50%;-webkit-text-stroke:0.35px #1f1f1f;"><u>V</u>incular con la celda:</span>
<span id="t97" style="left:668.8px;top:583.4px;font-size:13.7px;color:#1f1f1f;font-family:'DejaVu Sans', 'Liberation Sans', sans-serif;letter-spacing:0.397px;transform:scaleX(0.9);transform-origin:0 50%;-webkit-text-stroke:0.35px #1f1f1f;">Sombreado <u>3</u>D</span>
<div style="left:795px;top:405px;width:75px;height:25px;background:#fff;border:1px solid #a3a3a3;"></div>
<div style="left:795px;top:434px;width:96px;height:25px;background:#fff;border:1px solid #a3a3a3;"></div>
<div style="left:871px;top:436px;width:18px;height:21px;background:#e8e8e8;border:1px solid #d6d6d6;"></div>
<div style="left:871px;top:446px;width:18px;height:1px;background:#d0d0d0;"></div>
<svg style="left:875px;top:438.5px" width="10" height="16" viewBox="0 0 10 16"><path d="M0.500 5.400L5 1l4.500 4.400z" fill="#1a1a1a"/><path d="M0.500 10.600l4.500 4.400 4.500-4.400z" fill="#1a1a1a"/></svg>
<div style="left:795px;top:462.5px;width:96px;height:25px;background:#fff;border:1px solid #a3a3a3;"></div>
<div style="left:871px;top:464.5px;width:18px;height:21px;background:#e8e8e8;border:1px solid #d6d6d6;"></div>
<div style="left:871px;top:474.5px;width:18px;height:1px;background:#d0d0d0;"></div>
<svg style="left:875px;top:467.0px" width="10" height="16" viewBox="0 0 10 16"><path d="M0.500 5.400L5 1l4.500 4.400z" fill="#1a1a1a"/><path d="M0.500 10.600l4.500 4.400 4.500-4.400z" fill="#1a1a1a"/></svg>
<div style="left:795px;top:491px;width:96px;height:25px;background:#fff;border:1px solid #a3a3a3;"></div>
<div style="left:871px;top:493px;width:18px;height:21px;background:#e8e8e8;border:1px solid #d6d6d6;"></div>
<div style="left:871px;top:503px;width:18px;height:1px;background:#d0d0d0;"></div>
<svg style="left:875px;top:495.5px" width="10" height="16" viewBox="0 0 10 16"><path d="M0.500 5.400L5 1l4.500 4.400z" fill="#1a1a1a"/><path d="M0.500 10.600l4.500 4.400 4.500-4.400z" fill="#1a1a1a"/></svg>
<div style="left:795px;top:520px;width:96px;height:25px;background:#f0f0f0;border:1px solid #c4c4c4;"></div>
<div style="left:871px;top:522px;width:18px;height:21px;background:#e8e8e8;border:1px solid #d6d6d6;"></div>
<div style="left:871px;top:532px;width:18px;height:1px;background:#d0d0d0;"></div>
<svg style="left:875px;top:524.5px" width="10" height="16" viewBox="0 0 10 16"><path d="M0.500 5.400L5 1l4.500 4.400z" fill="#1a1a1a"/><path d="M0.500 10.600l4.500 4.400 4.500-4.400z" fill="#8f8f8f"/></svg>
<div style="left:799px;top:522px;width:70px;height:20px;background:#e9e9e9;"></div>
<span id="t98" style="left:800.7px;top:407.3px;font-size:13.5px;color:#1f1f1f;font-family:'DejaVu Sans', 'Liberation Sans', sans-serif;transform:scaleX(0.9);transform-origin:0 50%;-webkit-text-stroke:0.35px #1f1f1f;">0</span>
<span id="t99" style="left:800.7px;top:436.2px;font-size:13.5px;color:#1f1f1f;font-family:'DejaVu Sans', 'Liberation Sans', sans-serif;transform:scaleX(0.9);transform-origin:0 50%;-webkit-text-stroke:0.35px #1f1f1f;">0</span>
<span id="t100" style="left:800.7px;top:464.7px;font-size:13.5px;color:#1f1f1f;font-family:'DejaVu Sans', 'Liberation Sans', sans-serif;letter-spacing:-0.191px;transform:scaleX(0.9);transform-origin:0 50%;-webkit-text-stroke:0.35px #1f1f1f;">30000</span>
<span id="t101" style="left:800.7px;top:493.2px;font-size:13.5px;color:#1f1f1f;font-family:'DejaVu Sans', 'Liberation Sans', sans-serif;transform:scaleX(0.9);transform-origin:0 50%;-webkit-text-stroke:0.35px #1f1f1f;">1</span>
<div style="left:795px;top:548px;width:203px;height:25px;background:#fff;border:1px solid #a3a3a3;"></div>
<div style="left:971px;top:549px;width:26px;height:23px;background:#e4e4e4;border:1px solid #b4b4b4;"></div>
<svg style="left:977px;top:553px" width="14" height="15" viewBox="0 0 14 15"><path d="M7 1l5 5.500H8.500V10h-3V6.500H2z" fill="#111"/><path d="M2 12.500h10" stroke="#111" stroke-width="1.600"/></svg>
<div style="left:647.5px;top:584px;width:16.8px;height:16.8px;background:#fff;border:1.300px solid #444;"></div>
<svg style="left:647.5px;top:584px" width="17" height="17" viewBox="0 0 17 17"><path d="M3.300 8.300l3.600 3.700L13.800 4.400" stroke="#3a3a3a" stroke-width="1.300" fill="none"/></svg>
<div style="left:964px;top:801px;width:92px;height:27px;background:#e1e1e1;border:2px solid #0078d7;"></div>
<div style="left:1069px;top:801px;width:92px;height:27px;background:#e1e1e1;border:1px solid #adadad;"></div>
<span id="t102" style="left:985.5px;top:803.4px;font-size:13.7px;color:#1f1f1f;font-family:'DejaVu Sans', 'Liberation Sans', sans-serif;letter-spacing:0.234px;transform:scaleX(0.9);transform-origin:0 50%;-webkit-text-stroke:0.35px #1f1f1f;">Aceptar</span>
<span id="t103" style="left:1088.3px;top:803.4px;font-size:13.7px;color:#1f1f1f;font-family:'DejaVu Sans', 'Liberation Sans', sans-serif;letter-spacing:0.118px;transform:scaleX(0.9);transform-origin:0 50%;-webkit-text-stroke:0.35px #1f1f1f;">Cancelar</span>
</div></body></html>
